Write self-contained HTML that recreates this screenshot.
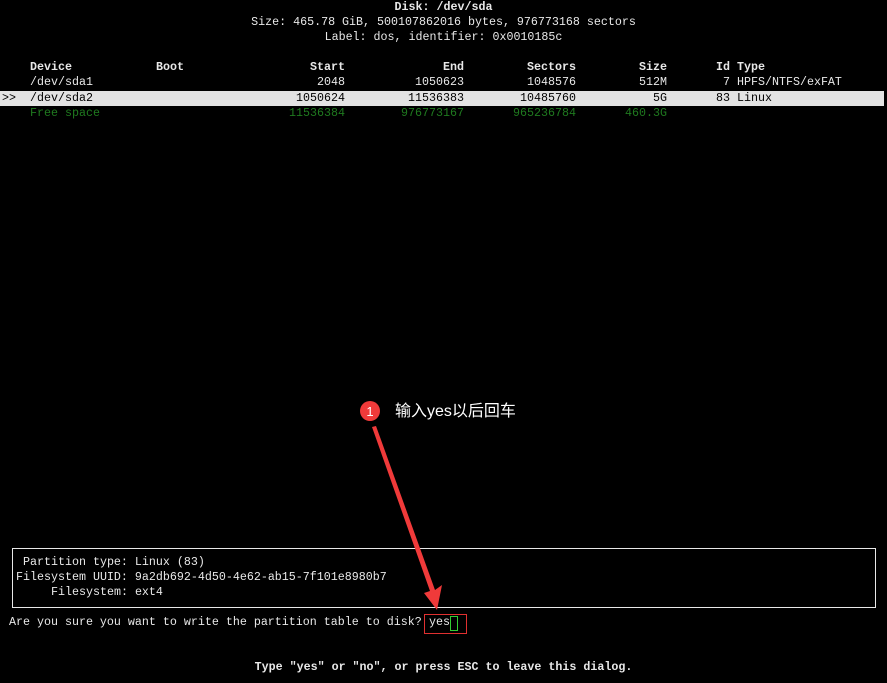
<!DOCTYPE html>
<html><head><meta charset="utf-8"><style>
html,body{margin:0;padding:0;background:#000;}
body{width:887px;height:683px;position:relative;overflow:hidden;font-family:"Liberation Mono",monospace;font-size:11.67px;color:#e8e8e8;}
.t{position:absolute;white-space:pre;line-height:15px;height:15px;}
.c{left:0;width:887px;text-align:center;}
b{font-weight:bold;}
.g{color:#1f7a1f;}
.bar{position:absolute;left:0;top:91px;width:884px;height:15px;background:#e3e3e3;}
.k{color:#000;}
</style></head><body>
<div class="t c" style="top:0"><b>Disk: /dev/sda</b></div>
<div class="t c" style="top:15px">Size: 465.78 GiB, 500107862016 bytes, 976773168 sectors</div>
<div class="t c" style="top:30px">Label: dos, identifier: 0x0010185c</div>

<div class="t" style="top:60px;left:30px"><b>Device</b></div>
<div class="t" style="top:60px;left:156px"><b>Boot</b></div>
<div class="t" style="top:60px;left:310px"><b>Start</b></div>
<div class="t" style="top:60px;left:443px"><b>End</b></div>
<div class="t" style="top:60px;left:527px"><b>Sectors</b></div>
<div class="t" style="top:60px;left:639px"><b>Size</b></div>
<div class="t" style="top:60px;left:716px"><b>Id</b></div>
<div class="t" style="top:60px;left:737px"><b>Type</b></div>

<div class="t" style="top:75px;left:30px">/dev/sda1</div>
<div class="t" style="top:75px;left:317px">2048</div>
<div class="t" style="top:75px;left:415px">1050623</div>
<div class="t" style="top:75px;left:527px">1048576</div>
<div class="t" style="top:75px;left:639px">512M</div>
<div class="t" style="top:75px;left:723px">7</div>
<div class="t" style="top:75px;left:737px">HPFS/NTFS/exFAT</div>

<div class="bar"></div>
<div class="t k" style="top:91px;left:2px">&gt;&gt;</div>
<div class="t k" style="top:91px;left:30px">/dev/sda2</div>
<div class="t k" style="top:91px;left:296px">1050624</div>
<div class="t k" style="top:91px;left:408px">11536383</div>
<div class="t k" style="top:91px;left:520px">10485760</div>
<div class="t k" style="top:91px;left:653px">5G</div>
<div class="t k" style="top:91px;left:716px">83</div>
<div class="t k" style="top:91px;left:737px">Linux</div>

<div class="t g" style="top:106px;left:30px">Free space</div>
<div class="t g" style="top:106px;left:289px">11536384</div>
<div class="t g" style="top:106px;left:401px">976773167</div>
<div class="t g" style="top:106px;left:513px">965236784</div>
<div class="t g" style="top:106px;left:625px">460.3G</div>

<div style="position:absolute;left:12px;top:548px;width:862px;height:58px;border:1px solid #e8e8e8;"></div>
<div class="t" style="top:555px;left:23px">Partition type: Linux (83)</div>
<div class="t" style="top:570px;left:16px">Filesystem UUID: 9a2db692-4d50-4e62-ab15-7f101e8980b7</div>
<div class="t" style="top:585px;left:51px">Filesystem: ext4</div>

<div class="t" style="top:615px;left:9px">Are you sure you want to write the partition table to disk? </div>
<div class="t" style="top:615px;left:429px">yes</div>
<div style="position:absolute;left:450px;top:616px;width:6px;height:13px;border:1px solid #3c3;"></div>
<div style="position:absolute;left:424px;top:614px;width:41px;height:18px;border:1px solid #e03030;"></div>

<div class="t c" style="top:660px"><b>Type "yes" or "no", or press ESC to leave this dialog.</b></div>

<svg style="position:absolute;left:0;top:0" width="887" height="683">
<polygon points="372,427 376,426 435,590 442,585 437,610 424,593 430,591" fill="#f03a3a"/>
<circle cx="370" cy="411" r="10" fill="#f03a3a"/>
<text x="370" y="416" fill="#fff" font-family="Liberation Sans,sans-serif" font-size="13" text-anchor="middle">1</text>
</svg>
<div style="position:absolute;left:395px;top:402px;color:#fff;font-family:'Liberation Sans','Noto Sans CJK SC',sans-serif;font-size:16px;line-height:20px;white-space:nowrap;">输入yes以后回车</div>
</body></html>
